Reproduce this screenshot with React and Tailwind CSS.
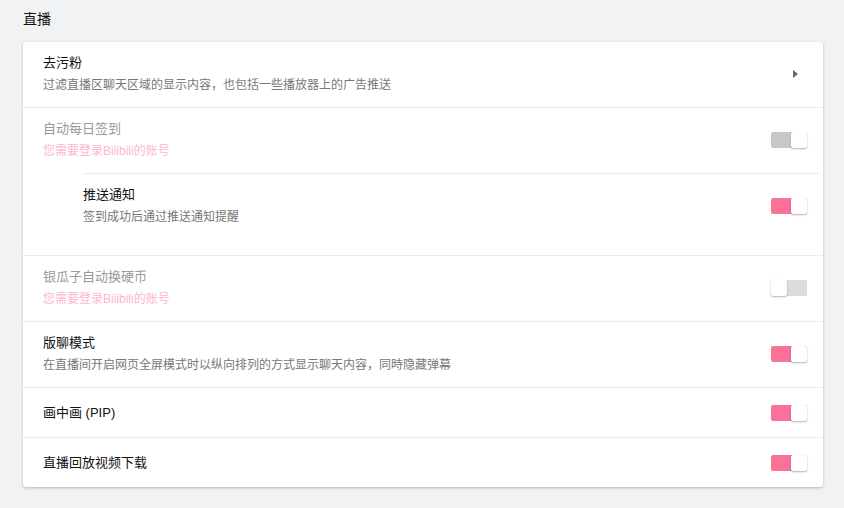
import React from "react";

const FONT = { fontFamily: '"Liberation Sans", "Noto Sans CJK SC", sans-serif' };

function Toggle({ on, disabled }) {
  const track = on ? (disabled ? "bg-[#c8c8c8]" : "bg-[#fb7299]") : "bg-[#dcdcdc]";
  return (
    <div className={`relative h-[16px] w-[36px] rounded-[2px] ${track}`}>
      <div
        className={`absolute top-0 h-[16px] w-[16px] rounded-[2px] bg-white shadow-[0_1px_2px_rgba(0,0,0,0.3)] ${
          on ? "right-0" : "left-0"
        }`}
      />
    </div>
  );
}

function Row({ title, desc, pink, disabled, right, single, children, last }) {
  return (
    <div className={last ? "" : "border-b border-[#ececec]"}>
      <div
        className={`flex items-center pl-[20px] pr-[16px] ${
          single ? "pt-[15px] pb-[14px]" : "pt-[11px] pb-[12px]"
        }`}
      >
        <div className="flex-1">
          <div className={`text-[13px] leading-[20px] ${disabled ? "text-[#999]" : "text-[#111]"}`}>{title}</div>
          {desc && <div className="mt-[2px] text-[12px] leading-[20px] text-[#777]">{desc}</div>}
          {pink && <div className="mt-[2px] text-[12px] leading-[20px] text-[#ffb6cf]">{pink}</div>}
        </div>
        {right}
      </div>
      {children}
    </div>
  );
}

export default function App() {
  return (
    <div className="min-h-[508px] w-[844px] bg-[#f1f2f4] pl-[23px] pr-[21px] pt-[9px]" style={FONT}>
      <div className="text-[14px] leading-[20px] text-[#111]">直播</div>
      <div className="mt-[13px] rounded-[3px] bg-white shadow-[0_1px_3px_rgba(0,0,0,0.25)]">
        <Row
          title="去污粉"
          desc="过滤直播区聊天区域的显示内容，也包括一些播放器上的广告推送"
          right={
            <svg width="8" height="10" viewBox="0 0 8 10" className="mr-[8px]">
              <path d="M2 1 L7 5 L2 9 Z" fill="#666" />
            </svg>
          }
        />
        <Row
          title="自动每日签到"
          pink="您需要登录Bilibili的账号"
          disabled
          right={<Toggle on disabled />}
        >
          <div className="ml-[60px] mr-[3px] border-t border-[#ececec] pb-[16px]">
            <div className="flex items-center pt-[11px] pb-[12px] pr-[13px]">
              <div className="flex-1">
                <div className="text-[13px] leading-[20px] text-[#111]">推送通知</div>
                <div className="mt-[2px] text-[12px] leading-[20px] text-[#777]">签到成功后通过推送通知提醒</div>
              </div>
              <Toggle on />
            </div>
          </div>
        </Row>
        <Row
          title="银瓜子自动换硬币"
          pink="您需要登录Bilibili的账号"
          disabled
          right={<Toggle on={false} />}
        />
        <Row
          title="版聊模式"
          desc="在直播间开启网页全屏模式时以纵向排列的方式显示聊天内容，同時隐藏弹幕"
          right={<Toggle on />}
        />
        <Row title="画中画 (PIP)" single right={<Toggle on />} />
        <Row title="直播回放视频下载" single last right={<Toggle on />} />
      </div>
    </div>
  );
}
